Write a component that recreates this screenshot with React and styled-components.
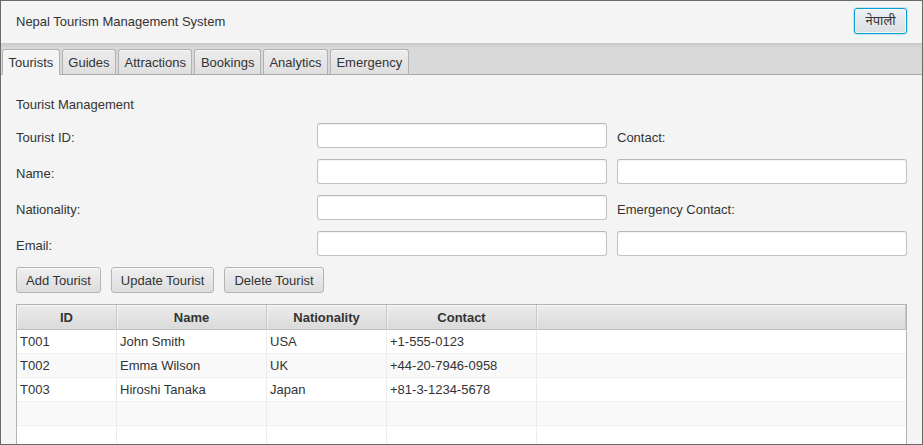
import styled, { createGlobalStyle } from "styled-components";

const GlobalStyle = createGlobalStyle`
  html, body {
    margin: 0;
    padding: 0;
    background: #f4f4f4;
  }
  body {
    font-family: "Liberation Sans", Arial, sans-serif;
    font-size: 13px;
    color: #333333;
  }
  * {
    box-sizing: border-box;
  }
`;

const tabs = ["Tourists", "Guides", "Attractions", "Bookings", "Analytics", "Emergency"];

const columns = [
  { key: "id", title: "ID", width: "100px" },
  { key: "name", title: "Name", width: "150px" },
  { key: "nationality", title: "Nationality", width: "120px" },
  { key: "contact", title: "Contact", width: "150px" },
];

const tourists = [
  { id: "T001", name: "John Smith", nationality: "USA", contact: "+1-555-0123" },
  { id: "T002", name: "Emma Wilson", nationality: "UK", contact: "+44-20-7946-0958" },
  { id: "T003", name: "Hiroshi Tanaka", nationality: "Japan", contact: "+81-3-1234-5678" },
  {},
  {},
  {},
];

export default function App() {
  return (
    <>
      <GlobalStyle />
      <Window>
        <Header>
          <Title>Nepal Tourism Management System</Title>
          <LangButton>नेपाली</LangButton>
        </Header>

        <TabBar>
          {tabs.map((t, i) => (
            <Tab key={t} $selected={i === 0}>{t}</Tab>
          ))}
        </TabBar>

        <Content>
          <SectionTitle>Tourist Management</SectionTitle>

          <FormGrid>
            <FieldLabel>Tourist ID:</FieldLabel>
            <TextInput />
            <FieldLabel>Contact:</FieldLabel>

            <FieldLabel>Name:</FieldLabel>
            <TextInput />
            <TextInput />

            <FieldLabel>Nationality:</FieldLabel>
            <TextInput />
            <FieldLabel>Emergency Contact:</FieldLabel>

            <FieldLabel>Email:</FieldLabel>
            <TextInput />
            <TextInput />
          </FormGrid>

          <ButtonRow>
            <Button>Add Tourist</Button>
            <Button>Update Tourist</Button>
            <Button>Delete Tourist</Button>
          </ButtonRow>

          <Table>
            {columns.map((c) => (
              <HeadCell key={c.key}>{c.title}</HeadCell>
            ))}
            <HeadCell />
            {tourists.map((row, i) => (
              <Row key={i}>
                {columns.map((c) => (
                  <Cell key={c.key} $odd={i % 2 === 1}>{row[c.key]}</Cell>
                ))}
                <Cell $odd={i % 2 === 1} />
              </Row>
            ))}
          </Table>
        </Content>
      </Window>
    </>
  );
}

const Window = styled.div`
  width: 923px;
  height: 445px;
  border: 1px solid #6a6a6a;
  background: #f4f4f4;
  display: flex;
  flex-direction: column;
  overflow: hidden;
`;

const Header = styled.div`
  display: flex;
  align-items: center;
  justify-content: space-between;
  padding: 7px 15px 9px 15px;
`;

const Title = styled.div`
  padding-top: 2px;
  font-size: 13px;
  line-height: 16px;
  color: #333;
`;

const LangButton = styled.button`
  width: 53px;
  height: 26px;
  padding: 0;
  font-family: "Noto Sans Devanagari", "Lohit Devanagari", "FreeSans", "Liberation Sans", sans-serif;
  font-size: 13px;
  color: #333;
  border: 1px solid #039ed3;
  border-radius: 3px;
  background: linear-gradient(to bottom, #eef1f3, #dcdfe1);
  box-shadow: 0 0 0 1px rgba(3, 158, 211, 0.18), inset 0 0 0 1px rgba(255, 255, 255, 0.75);
`;

const TabBar = styled.div`
  height: 32px;
  display: flex;
  align-items: flex-end;
  gap: 2px;
  padding: 0 0 0 1px;
  background: linear-gradient(to bottom, #c9c9c9 0px, #d8d8d8 5px, #dadada 100%);
  border-bottom: 1px solid #a8a8a8;
`;

const Tab = styled.div`
  height: 26px;
  margin-bottom: -1px;
  padding: 0 5.5px;
  display: flex;
  align-items: center;
  font-size: 13px;
  color: #333;
  border: 1px solid #b1b1b1;
  border-bottom-color: ${(p) => (p.$selected ? "#f4f4f4" : "#a8a8a8")};
  border-radius: 3px 3px 0 0;
  background: ${(p) =>
    p.$selected ? "#f4f4f4" : "linear-gradient(to bottom, #ececec, #dfdfdf)"};
  box-shadow: inset 0 1px 0 rgba(255, 255, 255, 0.55);
`;

const Content = styled.div`
  flex: 1;
  min-height: 0;
  display: flex;
  flex-direction: column;
  gap: 11px;
  padding: 21px 15px 0 15px;
`;

const SectionTitle = styled.div`
  padding-top: 1px;
  font-size: 13px;
  line-height: 15px;
`;

const FormGrid = styled.div`
  display: grid;
  grid-template-columns: 291px 290px 290px;
  grid-auto-rows: 25px;
  column-gap: 10px;
  row-gap: 11px;
`;

const FieldLabel = styled.div`
  display: flex;
  align-items: center;
  padding-top: 3px;
  font-size: 13px;
  color: #333;
`;

const TextInput = styled.input`
  height: 25px;
  width: 100%;
  margin: 0;
  border: 1px solid #c3c3c3;
  border-top-color: #b8b8b8;
  border-radius: 3px;
  background: #ffffff;
  box-shadow: inset 0 1px 2px rgba(0, 0, 0, 0.06);
  outline: none;
`;

const ButtonRow = styled.div`
  display: flex;
  gap: 10px;
`;

const Button = styled.button`
  height: 26px;
  padding: 0 9px;
  font-family: "Liberation Sans", Arial, sans-serif;
  font-size: 13px;
  color: #333;
  border: 1px solid #b4b4b4;
  border-radius: 3px;
  background: linear-gradient(to bottom, #efefef, #dddddd);
  box-shadow: inset 0 1px 0 rgba(255, 255, 255, 0.7);
`;

const Table = styled.div`
  flex: 1;
  min-height: 0;
  display: grid;
  grid-template-columns: 100px 150px 120px 150px 1fr;
  grid-auto-rows: 24px;
  grid-template-rows: 25px;
  align-content: start;
  border: 1px solid #b3b3b3;
  border-bottom: none;
  background: #ffffff;
  overflow: hidden;
`;

const HeadCell = styled.div`
  display: flex;
  align-items: center;
  justify-content: center;
  font-weight: bold;
  font-size: 13px;
  color: #333;
  background: linear-gradient(to bottom, #ececec, #dadada);
  border-right: 1px solid #c6c6c6;
  border-bottom: 1px solid #c0c0c0;
  box-shadow: inset 1px 1px 0 rgba(255, 255, 255, 0.6);

  &:last-of-type {
    border-right: none;
  }
`;

const Row = styled.div`
  display: contents;
`;

const Cell = styled.div`
  display: flex;
  align-items: center;
  padding-left: 3px;
  font-size: 13px;
  color: #333;
  white-space: nowrap;
  background: ${(p) => (p.$odd ? "#f9f9f9" : "#ffffff")};
  border-right: 1px solid #ececec;
  border-bottom: 1px solid #efefef;

  &:last-child {
    border-right: none;
  }
`;
